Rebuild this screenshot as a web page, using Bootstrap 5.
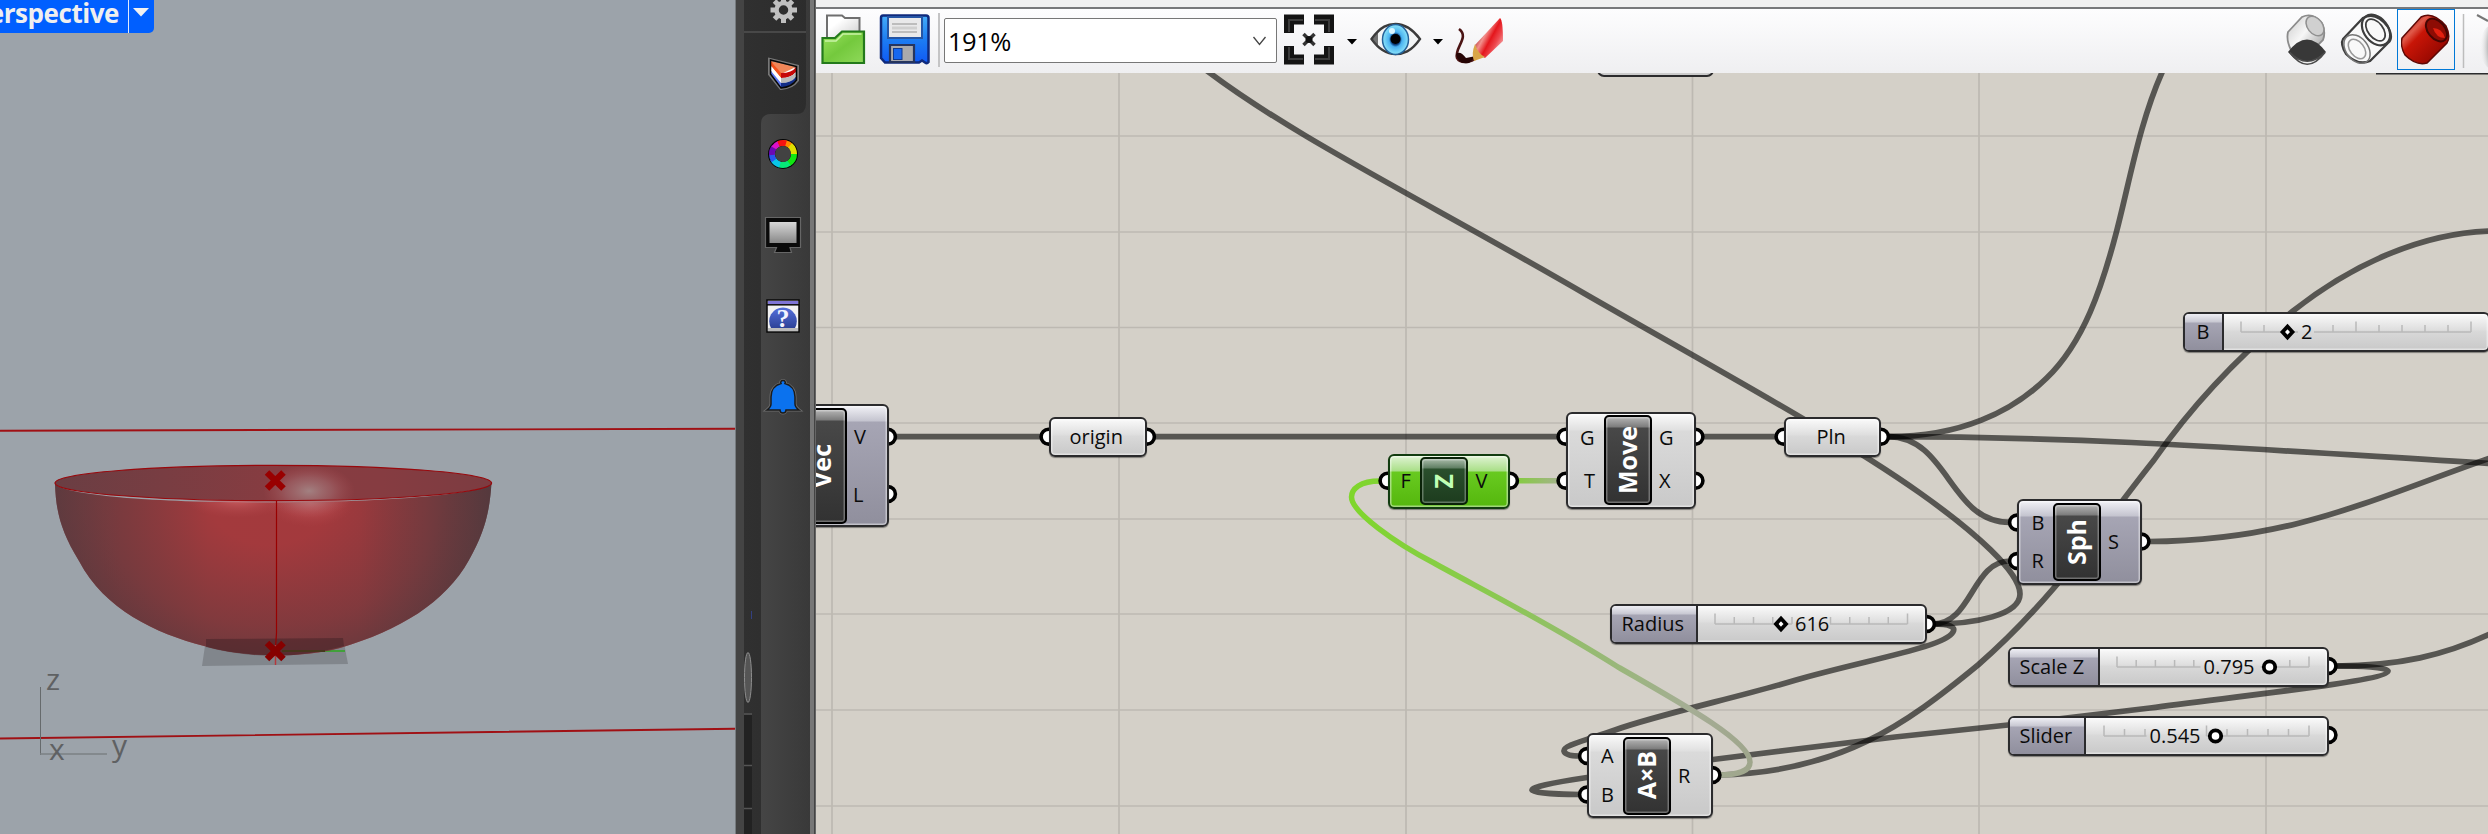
<!DOCTYPE html>
<html lang="en">
<head>
<meta charset="utf-8">
<title>Perspective and node canvas</title>
<link href="https://cdn.jsdelivr.net/npm/bootstrap@5.3.0/dist/css/bootstrap.min.css" rel="stylesheet">
<script src="https://cdn.jsdelivr.net/npm/bootstrap@5.3.0/dist/js/bootstrap.bundle.min.js"></script>
<style>
body{font-family:"Open Sans","Noto Sans",sans-serif;color:#000}
svg{display:block;flex:none}
.app{width:2488px;height:834px;background:#d4d0c8}
.viewport{width:736px;background:#9ca3aa;border-right:1px solid #777c80}
.viewtag{width:154px;height:33px;background:#005fff;color:#efefef;border-radius:0 0 5px 0;font-size:26px;font-weight:700;line-height:26px}
.viewtag .name{width:128px;padding-right:9px;letter-spacing:-.45px}
.viewtag .drop{width:26px;border-left:1px solid #dfeaff;padding:8px 0 0 4px}
.gutter{width:8px;background:#444}
.tabs{width:66px;background:linear-gradient(90deg,#303030,#2c2c2c)}
.edge{width:6px;background:linear-gradient(90deg,#777 0 4px,#444 4px 5px,#666 5px)}
.gh{min-width:0}
.titlegap{height:9px;background:#f0f0f0;border-bottom:2px solid #77787a}
.toolbar{height:64px;background:linear-gradient(#fdfdfe,#efeff1);padding:0}
.combo{width:333px;height:45px;margin:9px 6px 0 4px;border:1px solid #777;border-radius:2px;background:#fff;font-size:25.5px;line-height:44px;padding-left:3px;letter-spacing:-.5px}
.combo svg{margin:16px 9px 0 0}
.vsep{width:2px;height:54px;background:#c4c4c5}
.active-tool{width:58px;height:61px;border:1px solid #0078d7;padding:3px 0 0 3px}
.canvas{height:761px;background:#d4d0c8}
.node{border:2px solid #2b2b2d;border-radius:6px;box-shadow:0 1px 1px rgba(0,0,0,.4),inset 0 0 0 1.5px rgba(255,255,255,.45)}
.plain{background:linear-gradient(#fafafa,#dedede 16px,#d9d9d9 17px,#c9c9c9)}
.tall.plain{background:linear-gradient(#fafafa,#e0e0e0 16px,#dadada 17px,#c9c9c9)}
.violet{background:linear-gradient(#f1f1f6,#c4c4cf 15px,#a6a5b4 16px,#908f9d)}
.sl-name.violet{background:linear-gradient(#eeeef4,#c8c8d2 8px,#a6a5b4 9px,#908f9d)}
.green{background:linear-gradient(#dff3d3,#a9df87 15px,#68ca20 16px,#55b70d);border-color:#123c10}
.core{border:2px solid #000;border-radius:5px;background:linear-gradient(#b5b5b5,#7c7c7c 10px,#484848 11px,#323232);box-shadow:inset 0 0 0 1.5px rgba(255,255,255,.3);color:#fff;font-weight:700;font-size:25px}
.core span{writing-mode:vertical-rl;text-orientation:sideways;transform:rotate(180deg) translateX(1px);line-height:30px;white-space:nowrap}
.green .core{background:linear-gradient(#a9bba9,#5f7e62 9px,#2a4f2c 10px,#1d3c1e);color:#c0ffb4;border-color:#0a2208}
.lab{font-size:20px;line-height:28px;white-space:nowrap;color:#0b0b0b}
.sl-name{border-right:2px solid #2b2b2d;border-radius:4px 0 0 4px}
.axis{font-size:30px;line-height:30px;color:#5f6163}
</style>
</head>
<body class="m-0 overflow-hidden">
<div class="app d-flex overflow-hidden">

  <section class="viewport position-relative flex-shrink-0 overflow-hidden">
    <svg class="position-absolute top-0 start-0" width="735" height="834">
      <defs>
        <linearGradient id="bowl" x1="0" x2="1"><stop offset="0" stop-color="#7a3d42"/><stop offset=".15" stop-color="#903a3e"/><stop offset=".35" stop-color="#a33a3d"/><stop offset=".7" stop-color="#a3393d"/><stop offset=".85" stop-color="#8b3a3e"/><stop offset=".95" stop-color="#723a3e"/><stop offset="1" stop-color="#5f3a3e"/></linearGradient>
        <radialGradient id="shade" gradientUnits="userSpaceOnUse" cx="270" cy="500" r="240" gradientTransform="matrix(1 0 0 .75 0 125)"><stop offset=".25" stop-color="#523a3e" stop-opacity="0"/><stop offset=".7" stop-color="#523a3e" stop-opacity=".42"/><stop offset="1" stop-color="#50383c" stop-opacity=".8"/></radialGradient>
        <radialGradient id="glow"><stop offset="0" stop-color="#a58888" stop-opacity=".9"/><stop offset=".5" stop-color="#a87478" stop-opacity=".5"/><stop offset="1" stop-color="#b05055" stop-opacity="0"/></radialGradient>
        <radialGradient id="glow2"><stop offset="0" stop-color="#d06468" stop-opacity=".8"/><stop offset="1" stop-color="#b04448" stop-opacity="0"/></radialGradient>
        <linearGradient id="inside" x1="0" x2="1"><stop offset="0" stop-color="#6a3e43"/><stop offset=".5" stop-color="#873c41"/><stop offset=".75" stop-color="#863c41"/><stop offset="1" stop-color="#7c3c41"/></linearGradient>
      </defs>
      <path d="M0 430.800L735 428.700M0 738.500L735 728.700" stroke="#a01014" stroke-width="1.900"/>
      <path d="M206 639L343 638L348 664L202 666Z" fill="#81868c"/>
      <path d="M300 651H345" stroke="#41a03a" stroke-width="2"/>
      <path d="M55 484C56 510 60 530 79 561C105 610 155 633 204 646C240 657 300 659 340 648C400 630 445 603 469 560C485 532 490 510 491.500 482C480 508 80 510 55 484Z" fill="url(#bowl)"/>
      <path d="M55 484C56 510 60 530 79 561C105 610 155 633 204 646C240 657 300 659 340 648C400 630 445 603 469 560C485 532 490 510 491.500 482C480 508 80 510 55 484Z" fill="url(#shade)"/>
      <ellipse cx="310" cy="503" rx="44" ry="24" fill="url(#glow2)"/><ellipse cx="238" cy="500" rx="52" ry="18" fill="url(#glow2)"/>
      <ellipse cx="273.300" cy="483" rx="218.300" ry="17.700" fill="url(#inside)"/>
      <ellipse cx="309" cy="491" rx="46" ry="27" fill="url(#glow)"/>
      <ellipse cx="273.300" cy="483" rx="218.300" ry="17.700" fill="none" stroke="#98080c" stroke-width="1.200"/>
      <path d="M206 639L343 638L344 646Q275 665 206 647Z" fill="#3c2024" opacity=".45"/>
      <path d="M282 651H325" stroke="#45371c" stroke-width="2"/>
      <path d="M276.500 501V633L275.500 648" stroke="#980000" stroke-width="1.200" fill="none"/><path d="M275.500 645V665" stroke="#b5383c" stroke-width="1.500"/>
      <g stroke="#990000" stroke-width="6.500"><path d="M267 472.500L283.500 488.500M283.500 472.500L267 488.500"/><path d="M267 643L283.500 659M283.500 643L267 659" stroke="#860000"/></g>
      <path d="M40.500 687V755" stroke="#666a6c"/><path d="M40 754H107" stroke="#7b8083" stroke-width="1.500"/>
    </svg>
    <div class="viewtag position-absolute top-0 start-0 d-flex overflow-hidden">
      <div class="name d-flex justify-content-end">erspective</div>
      <div class="drop"><svg width="16" height="9"><path d="M0 0H16L8 8.500Z" fill="#f1f1f1"/></svg></div>
    </div>
    <span class="axis position-absolute" style="left:46px;top:664px">z</span>
    <span class="axis position-absolute" style="left:49px;top:734px">x</span>
    <span class="axis position-absolute" style="left:112px;top:730px">y</span>
  </section>

  <aside class="d-flex flex-shrink-0">
    <div class="gutter"></div>
    <div class="tabs">
      <svg width="66" height="834" viewBox="744 0 66 834">
        <defs><linearGradient id="tabg" x1="0" x2="1"><stop offset="0" stop-color="#454545"/><stop offset="1" stop-color="#393939"/></linearGradient>
        <linearGradient id="scr" x1="0" x2="0" y1="0" y2="1"><stop offset="0" stop-color="#d8d8d8"/><stop offset="1" stop-color="#888"/></linearGradient>
        <linearGradient id="hb" x1="0" x2="0" y1="0" y2="1"><stop offset="0" stop-color="#5470dc"/><stop offset="1" stop-color="#2d4298"/></linearGradient></defs>
        <path d="M761 834V124Q761 114 771 114H796Q806 114 806 104V0H810V834Z" fill="url(#tabg)"/>
        <path d="M744 32H806" stroke="#484848" stroke-width="1.800"/>
        <rect x="744" y="715" width="8" height="119" fill="#222"/>
        <path d="M744 714H752M744 765.500H752M744 808.500H752" stroke="#555" stroke-width="1.500"/>
        <ellipse cx="748" cy="677.500" rx="3.500" ry="25" fill="#555" stroke="#8e8e8e"/>
        <path d="M751.500 611V619" stroke="#334080"/>
        <!-- gear -->
        <g stroke="#c0c0c0" stroke-width="5"><path d="M783.500 -3V4M783.500 16V23M770.500 10H777M790 10H797M774.500 1L779 5.500M792.500 1L788 5.500M774.500 19L779 14.500M792.500 19L788 14.500"/><circle cx="783.500" cy="10" r="7" fill="none" stroke-width="4.500"/></g>
        <!-- layers wedge -->
        <path d="M770 60L797 66.500V80Q792 87 781 88L770 74Z" fill="#fff" stroke="#777" stroke-width="4"/>
        <path d="M771 61L796 67L781 74Z" fill="#f08658"/><path d="M771 61L781 73V78L771 66Z" fill="#f4511a"/><path d="M781 73Q792 73 796 67V72Q791 78 781 78Z" fill="#c60808"/><path d="M771 66L781 78V83L771 71Z" fill="#fff"/><path d="M781 78Q791 78 796 72V77Q791 83 781 83Z" fill="#bbb"/><path d="M771 71L781 83V88L771 75Z" fill="#5b76ee"/><path d="M781 83Q791 83 796 77V80Q790 87 781 88Z" fill="#122d86"/>
        <path d="M770.500 60L796.500 66.500V80Q792 87 781 88L770.500 74Z" fill="none" stroke="#070707" stroke-width="1.500"/>
        <!-- colour ring -->
        <circle cx="783" cy="154" r="15" fill="#050505"/>
        <g fill="none" stroke-width="6"><path d="M783 143A11 11 0 0 1 792.500 148.500" stroke="#ff8a00"/><path d="M790 145.500A11 11 0 0 1 794 154" stroke="#dfdf00"/><path d="M794 154A11 11 0 0 1 788.500 163.500" stroke="#12e612"/><path d="M789 163A11 11 0 0 1 779 164.300" stroke="#06e878"/><path d="M780 164.500A11 11 0 0 1 773 159" stroke="#09c6e8"/><path d="M774 160.500A11 11 0 0 1 772 154" stroke="#2a56ee"/><path d="M772 155A11 11 0 0 1 774.500 147" stroke="#6a09b4"/><path d="M774 148A11 11 0 0 1 779 143.700" stroke="#dc10c8"/><path d="M778.500 143.900A11 11 0 0 1 786 143.400" stroke="#f51212"/></g>
        <circle cx="783" cy="154" r="8" fill="#424242"/>
        <!-- monitor -->
        <path d="M765.500 217.500H800.500V247.500H790L791.500 252.500H774.500L776.500 247.500H765.500Z" fill="#0a0a0a" stroke="#666" stroke-width="1.200"/><rect x="769.500" y="222" width="27" height="21" fill="url(#scr)"/>
        <!-- help panel -->
        <rect x="767" y="300" width="32" height="32" fill="#f2f2f2" stroke="#080808" stroke-width="1.500"/><rect x="768" y="301" width="30" height="3" fill="#7f75d6"/><path d="M767 304.800H799" stroke="#080808" stroke-width="1.500"/><path d="M771 328A13.800 13.800 0 1 1 795 328Z" fill="url(#hb)"/><rect x="768" y="328" width="30" height="3" fill="#bbb"/>
        <text x="783" y="327" text-anchor="middle" font-family="Liberation Serif,serif" font-weight="700" font-size="26" fill="#f4f4ff">?</text>
        <!-- bell -->
        <path d="M783 380.500a2 2 0 0 1 2 3C791 385 795 390 795 397V404Q795 407 799 410H786a3 3 0 0 1-6 0H767Q771 407 771 404V397C771 390 775 385 781 383.500a2 2 0 0 1 2-3Z" fill="#0b72ee" stroke="#6c6c6c" stroke-width="3"/>
        <path d="M783 380.500a2 2 0 0 1 2 3C791 385 795 390 795 397V404Q795 407 799 410H786a3 3 0 0 1-6 0H767Q771 407 771 404V397C771 390 775 385 781 383.500a2 2 0 0 1 2-3Z" fill="#0b72ee" stroke="#1b1b1b" stroke-width="1.500"/>
      </svg>
    </div>
    <div class="edge"></div>
  </aside>

  <main class="gh flex-grow-1 d-flex flex-column">
    <div class="titlegap flex-shrink-0"></div>
    <div class="toolbar d-flex flex-shrink-0">
      <svg width="122" height="64" viewBox="816 9 122 64">
        <defs>
          <linearGradient id="gf" x1="0" x2="1" y1="0" y2="1"><stop offset="0" stop-color="#9be35f"/><stop offset=".5" stop-color="#74c93d"/><stop offset="1" stop-color="#8fd95a"/></linearGradient>
          <linearGradient id="bf" x1="0" x2="0" y1="0" y2="1"><stop offset="0" stop-color="#45adf8"/><stop offset=".5" stop-color="#1d7df2"/><stop offset="1" stop-color="#0f59f5"/></linearGradient>
          <linearGradient id="paper" x1="0" x2="1" y1="0" y2="1"><stop offset=".3" stop-color="#fff"/><stop offset="1" stop-color="#c9c9c9"/></linearGradient>
        </defs>
        <path d="M827 40V15.500H842L845 18H859.500V40Z" fill="url(#paper)" stroke="#6f6f6f" stroke-width="2"/>
        <path d="M822.500 38H835L842 31.500H864V63H822.500Z" fill="url(#gf)" stroke="#237a1b" stroke-width="2.200"/>
        <path d="M825 41H836L843 34H861.500" fill="none" stroke="#c9f3a6" stroke-width="1.500"/>
        <path d="M883 15.500H926Q928.500 15.500 928.500 18V62Q927 64 925 62.500L922 60.500L919 62.500H885L881 58V18Q881 15.500 883 15.500Z" fill="url(#bf)" stroke="#0f2a7c" stroke-width="2.500"/>
        <path d="M888 17H922V38H888Z" fill="#e9e9ea" stroke="#2555a4" stroke-width="2"/><path d="M892 24H917M892 32H917" stroke="#bdbdbd" stroke-width="2"/><path d="M892 28H917" stroke="#d0d0d0" stroke-width="3"/>
        <path d="M890 45H914V62H890Z" fill="#a9a9ac" stroke="#26355e" stroke-width="2.200"/><rect x="893.500" y="48.500" width="8.500" height="11" fill="#1667f0" stroke="#10398f"/>
      </svg>
      <div class="vsep mt-1"></div>
      <div class="combo d-flex justify-content-between flex-shrink-0"><span>191%</span><svg width="15" height="12"><path d="M1.500 2L7.500 9.500L13.500 2" fill="none" stroke="#444" stroke-width="1.300"/></svg></div>
      <svg width="230" height="64" viewBox="1283 9 230 64">
        <defs><radialGradient id="iris"><stop offset="0" stop-color="#002a5c"/><stop offset=".35" stop-color="#0a3d7c"/><stop offset=".5" stop-color="#4ab2f0"/><stop offset="1" stop-color="#8be4fa"/></radialGradient>
        <linearGradient id="pen" gradientUnits="userSpaceOnUse" x1="1478" y1="30" x2="1508" y2="46"><stop offset=".1" stop-color="#c2494b"/><stop offset=".25" stop-color="#f2908c"/><stop offset=".45" stop-color="#e4161c"/><stop offset=".65" stop-color="#ee4a50"/><stop offset=".9" stop-color="#f7bcbc"/></linearGradient></defs>
        <path d="M1289 33V19.500H1304M1314 19.500H1329V33M1329 46V59.500H1314M1304 59.500H1289V46" fill="none" stroke="#141414" stroke-width="10"/>
        <path d="M1289 32V20H1303M1315 20H1329V32M1329 47V59H1315M1303 59H1289V47" fill="none" stroke="#3c3c3c" stroke-width="2"/>
        <path d="M1303.500 34L1314.500 45M1314.500 34L1303.500 45" stroke="#333" stroke-width="3.500"/><circle cx="1309" cy="39.500" r="3.500" fill="#111"/>
        <path d="M1347 39H1357L1352 44.500ZM1433 39H1443L1438 44.500Z" fill="#000"/>
        <path d="M1371.500 39C1381 26 1388 24 1395.500 24C1403 24 1411 27 1420 39C1411 52 1403 54 1395.500 54C1388 54 1380 51 1371.500 39Z" fill="#f3f5f6" stroke="#3b3b3b" stroke-width="2.300"/>
        <path d="M1372 40Q1374 35 1378 32V47Q1374 44 1372 40Z" fill="#454545" opacity=".75"/>
        <ellipse cx="1395.500" cy="39.500" rx="13" ry="15" fill="url(#iris)" stroke="#25629a" stroke-width="1.500"/><circle cx="1395.500" cy="39" r="5" fill="#000"/><circle cx="1392" cy="31" r="3" fill="#d9f7ff"/>
        <path d="M1459 29C1470 37 1454 48 1457 58C1460 64 1471 63 1477 57" fill="none" stroke="#4b1414" stroke-width="2.600"/>
        <path d="M1456 54Q1460 50 1466 58L1476 56L1469 63Q1458 65 1456 54Z" fill="#260505"/>
        <path d="M1475 45L1500 18Q1503 20 1503 41L1485 58Q1478 56 1475 45Z" fill="url(#pen)"/><path d="M1475 44Q1478 54 1485 57L1474 61Q1471 54 1475 44Z" fill="#d9a648"/>
      </svg>
      <svg class="ms-auto" width="117" height="64" viewBox="2280 9 117 64">
        <defs><linearGradient id="cg" x1="0" x2="1" y1="0" y2=".8"><stop offset="0" stop-color="#c9c9c9"/><stop offset=".5" stop-color="#f7f7f7"/><stop offset="1" stop-color="#a5a5a5"/></linearGradient></defs>
        <path d="M2288 32L2302 17Q2313 12 2322 23Q2326 32 2323 40L2309 54L2291 50Q2286 40 2288 32Z" fill="url(#cg)" stroke="#8b8b8b" stroke-width="1.800"/>
        <ellipse cx="2315" cy="26" rx="7.500" ry="11" transform="rotate(-38 2315 26)" fill="#d0d0d0" stroke="#909090" stroke-width="1.500"/>
        <path d="M2288 52Q2307 27 2326 52Q2307 75 2288 52Z" fill="#383838"/><path d="M2290 52.500Q2307 70 2325 52.500Q2307 76 2290 52.500Z" fill="#eee" stroke="#4a4a4a" stroke-width="1.500"/>
        <g fill="none" stroke="#3d3d3d" stroke-width="2.200"><path d="M2343 39L2363 18Q2376 11 2388 27Q2394 38 2388 43L2370 61Q2358 66 2346 54Q2340 44 2343 39Z" fill="#f9f9f9"/><ellipse cx="2376" cy="30" rx="12" ry="17" transform="rotate(-38 2376 30)"/><ellipse cx="2375.500" cy="30" rx="7.500" ry="12.500" transform="rotate(-38 2375.500 30)" stroke-width="1.700"/><ellipse cx="2357" cy="49" rx="11" ry="16" transform="rotate(-38 2357 49)" stroke-width="1.500" stroke="#777"/><ellipse cx="2357" cy="49" rx="7" ry="11" transform="rotate(-38 2357 49)" stroke-width="1.500" stroke="#999"/></g>
      </svg>
      <div class="active-tool mt-0">
        <svg width="51" height="56" viewBox="2401 13 51 56">
          <defs><linearGradient id="rg" x1="0" x2="1" y1="0" y2="1"><stop offset=".1" stop-color="#a80d08"/><stop offset=".28" stop-color="#e05a4a"/><stop offset=".4" stop-color="#c81507"/><stop offset=".75" stop-color="#9c0a02"/><stop offset="1" stop-color="#4b0000"/></linearGradient></defs>
          <path d="M2402 38L2421 17Q2433 11 2446 26Q2451 36 2447 43L2427 63Q2416 66 2405 55Q2400 46 2402 38Z" fill="url(#rg)" stroke="#5d0805" stroke-width="1.500"/>
          <ellipse cx="2436.500" cy="30" rx="8.500" ry="13" transform="rotate(-40 2436.500 30)" fill="#8d0c04" stroke="#450503" stroke-width="2"/><path d="M2433 28Q2442 28 2445 38Q2436 38 2433 28Z" fill="#e22010"/>
        </svg>
      </div>
      <svg width="33" height="64" viewBox="2455 9 33 64"><defs><radialGradient id="sph" cx="1" cy=".5" r="1"><stop offset="0" stop-color="#4e4e4e"/><stop offset=".6" stop-color="#888"/><stop offset="1" stop-color="#eee" stop-opacity="0"/></radialGradient></defs><path d="M2463.500 14V68" stroke="#bdbdbd" stroke-width="1.500"/><path d="M2477 15L2488 21" stroke="#777" stroke-width="2"/><ellipse cx="2494" cy="47" rx="14" ry="23" fill="url(#sph)"/></svg>
    </div>

    <div class="canvas position-relative overflow-hidden" id="canvas">
      <svg class="position-absolute top-0 start-0" width="1672" height="761" viewBox="816 73 1672 761">
        <defs><linearGradient id="gw" gradientUnits="userSpaceOnUse" x1="1351" x2="1751" y1="0" y2="0"><stop offset="0" stop-color="#7fd62c"/><stop offset=".35" stop-color="#8ac950"/><stop offset=".66" stop-color="#99b77a"/><stop offset=".85" stop-color="#a5ad95"/><stop offset="1" stop-color="#9fa68c"/></linearGradient>
        <linearGradient id="gs" gradientUnits="userSpaceOnUse" x1="1518" x2="1557" y1="0" y2="0"><stop offset="0" stop-color="#86cb42"/><stop offset="1" stop-color="#a2b487"/></linearGradient></defs>
        <path stroke="#bdb9b2" stroke-width="1.700" fill="none" d="M832 73V834M1119 73V834M1406 73V834M1692.500 73V834M1979 73V834M2266 73V834M816 136H2488M816 232H2488M816 327.500H2488M816 423H2488M816 519H2488M816 614H2488M816 710H2488M816 806H2488"/>
        <g fill="none" stroke="#000" stroke-opacity=".59" stroke-width="5.700">
          <path d="M896 436.700H1041"/><path d="M1154 436.700H1558"/><path d="M1703 436.700H1776"/>
          <path d="M1888 436.700C1949 437 1949 522.300 2010 522.300"/>
          <path d="M1888 436.700C1960 437 2012 412 2046.700 378C2084 342 2102 287 2116.500 231.700C2130 180 2140 120 2164 68"/>
          <path d="M1888 436.700C2100 437 2250 449 2490 463.500"/>
          <path d="M1202 67C1290 135 1420 198 1587 295C1700 360 1840 436 1920 493C1975 532 2020 572 2020 594C2020 615 1975 624 1933 624"/>
          <path d="M1933 624C1972 624 1972 561 2010 561"/>
          <path d="M1933 624C1950 624 1956 627 1953 632C1945 647 1870 659 1796 680C1740 697 1660 714 1615 730C1580 742 1563 746 1564 751C1565 755 1572 756 1580 756"/>
          <path d="M1719 775C1840 772 1905 725 1978 665C2055 598 2100 528 2154 460C2190 408 2240 355 2293 311C2350 266 2420 233 2490 231"/>
          <path d="M2149 541.500C2290 541 2370 500 2490 458"/>
          <path d="M2335 666C2400 666 2445 655 2490 634"/>
          <path d="M2335 666C2360 666 2387 667 2388 671C2388 681 2230 697 2150 708L2008 725L1895 737L1713 759.500L1587 777.500C1550 783 1532 787 1532 790C1533 793 1560 794.500 1580 794.500"/>
        </g>
        <path d="M1380 481C1360 481 1351.500 489 1351.500 497C1351.500 512 1395 543 1434 563C1475 586 1540 618 1618 667C1690 708 1750 742 1750 762C1750 771 1737 775 1719 775" fill="none" stroke="url(#gw)" stroke-width="5.500"/>
        <rect x="1516" y="478" width="42" height="5.500" fill="url(#gs)"/>
        <g id="ports" fill="#fff" stroke="#000" stroke-width="3.600"></g>
        <rect x="1598" y="58" width="115" height="18" rx="6" fill="#ccc" stroke="#2b2b2d" stroke-width="2"/>
        <path d="M2376 73.500H2488" stroke="#2b2b2d" stroke-width="2"/>
      </svg>
    </div>
  </main>
</div>
<script>
// Coordinates are in window space; the canvas origin sits at (816, 73).
const OX=816, OY=73, canvas=document.getElementById('canvas');
const el=(cls,x,y,w,h,parent)=>{const d=document.createElement('div');d.className='position-absolute '+cls;
  d.style.cssText=`left:${x}px;top:${y}px;`+(w?`width:${w}px;height:${h}px;`:'');parent.append(d);return d;};
const label=(t,x,cy)=>{el('lab',x-OX,cy-14-OY,0,0,canvas).textContent=t;};
const ports=[[888,436.7],[888,494],[1048.500,436.7],[1147,436.7],[1565.500,436.7],[1565.500,480.7],[1695.500,436.7],[1695.500,480.7],
  [1387.500,480.7],[1510,480.7],[1783.500,436.7],[1881,436.7],[1927,624],[1587,756],[1587,794.5],[1712.500,775],[2017,522.5],[2017,561],[2141.500,541.5],[2328.500,666],[2328.500,735]];
document.getElementById('ports').innerHTML=ports.map(p=>`<circle cx="${p[0]}" cy="${p[1]}" r="7.4"/>`).join('');

const nodes=[
 {k:'violet',b:[780,404,108.5,123],c:[798,407.5,48.5,116,'Vec']},
 {k:'plain',b:[1049,416.5,98,40]},
 {k:'plain tall',b:[1565.5,411.5,130,97],c:[1603.5,415,48,90,'Move']},
 {k:'green',b:[1387.5,453.5,122.5,55],c:[1420,457,48,48,'Z']},
 {k:'plain',b:[1783.5,416.5,97.5,40]},
 {k:'plain tall',b:[1587,732.5,126,85],c:[1622.5,736.5,48,78,'A×B']},
 {k:'violet',b:[2017,499,124.5,86],c:[2053,503,48,78,'Sph']}];
for(const n of nodes){const [x,y,w,h]=n.b;const d=el('node '+n.k,x-OX,y-OY,w,h,canvas);
  if(n.c){const [a,b,e,f,t]=n.c;const c=el('core d-flex align-items-center justify-content-center',a-x-2,b-y-2,e,f,d);c.innerHTML='<span></span>';c.firstChild.textContent=t;}}

const sliders=[
 {b:[1610,604,317,40],d:1696.5,n:['Radius',1621.5],t:[1715,1907.5],g:['d',1781],v:['616',1795]},
 {b:[2183,311.5,307,40],d:2223,n:['B',2196.5],t:[2241,2471],g:['d',2287.5],v:['2',2301]},
 {b:[2008,646.5,320.5,40],d:2098.5,n:['Scale Z',2019.5],t:[2117,2309],g:['c',2269.5],v:['0.795',2203.5]},
 {b:[2008,715.5,320.5,40],d:2085,n:['Slider',2019.5],t:[2104,2309],g:['c',2215.5],v:['0.545',2149.5]}];
for(const s of sliders){const [x,y,w,h]=s.b;const d=el('node plain',x-OX,y-OY,w,h,canvas);
  el('violet sl-name',0,0,s.d-x-1,h-4,d);
  const cy=y+20,[a,b]=s.t,gx=s.g[1],vx=s.v[1],vw=s.v[0].length*11;let p=`M${a} ${cy}H${vx-3}M${vx+vw+2} ${cy}H${b}`;
  for(let i=0;i<=10;i++){const tx=a+(b-a)*i/10;if(tx>vx-3&&tx<vx+vw+2)continue;p+=`M${tx} ${cy}V${cy-(i%5?7:10.5)}`;}
  const mark=s.g[0]=='d'?`<path d="M${gx} ${cy-5.5}L${gx+5} ${cy}L${gx} ${cy+5.5}L${gx-5} ${cy}Z"/>`:`<circle cx="${gx}" cy="${cy}" r="5.7"/>`;
  const o=el('',x-OX,y-OY,w,h,canvas);
  o.innerHTML=`<svg width="${w}" height="${h}" viewBox="${x} ${y} ${w} ${h}"><path d="${p}" stroke="#b9b9b9" stroke-width="1.5" fill="none"/><g fill="#fff" stroke="#000" stroke-width="3.8">${mark}</g></svg>`;
  label(s.n[0],s.n[1],cy);label(s.v[0],vx,cy);}

[['V',854,437],['L',853,494.5],['origin',1069.500,437],['G',1580,437.5],['T',1584,481],['G',1659,437.5],['X',1659,481],
 ['F',1400.500,481],['V',1475.500,481],['Pln',1816.500,437],['A',1601,756],['B',1601,794.5],['R',1678,775.5],['B',2031.500,522.5],['R',2031.500,561],['S',2108,541.5]]
 .forEach(l=>label(...l));
</script>
</body>
</html>
